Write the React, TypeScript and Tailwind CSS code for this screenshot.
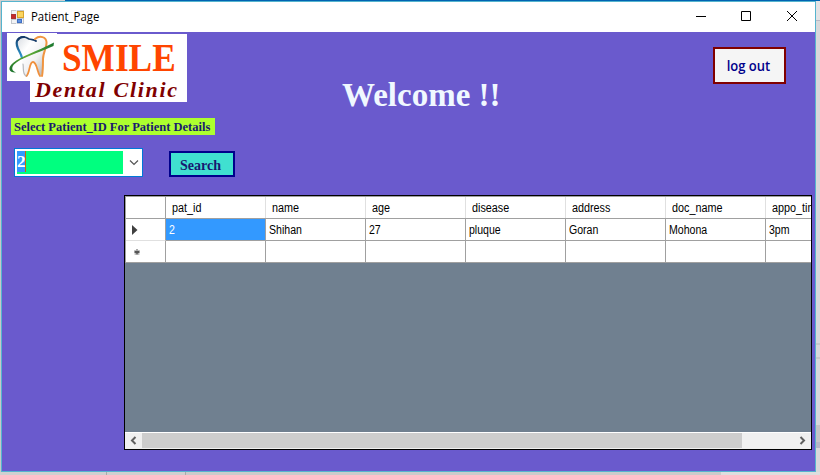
import React from "react";

const columns = ["pat_id", "name", "age", "disease", "address", "doc_name", "appo_time"];
const record = ["2", "Shihan", "27", "pluque", "Goran", "Mohona", "3pm"];

function FormIcon() {
  return (
    <svg width="14" height="14" viewBox="0 0 14 14" shapeRendering="crispEdges">
      <rect x="0" y="0" width="13" height="14" fill="#c3c7cd" />
      <rect x="1" y="1" width="4" height="3" fill="#f2f3f5" />
      <rect x="1" y="10" width="4" height="3" fill="#f2f3f5" />
      <rect x="5" y="0" width="1" height="14" fill="#e9eaec" />
      <rect x="0" y="4" width="5" height="5" fill="#a33" />
      <rect x="1" y="5" width="3" height="3" fill="#c8282a" />
      <rect x="6" y="1" width="7" height="7" fill="#d9a42c" />
      <rect x="7" y="2" width="5" height="5" fill="#fbd55f" />
      <rect x="6" y="9" width="5" height="4" fill="#3f6fc4" />
      <rect x="7" y="10" width="3" height="2" fill="#5f92e2" />
      <rect x="11" y="9" width="1" height="4" fill="#f2f3f5" />
    </svg>
  );
}

function ToothLogo() {
  return (
    <svg width="50" height="48" viewBox="0 0 50 48" fill="none" strokeLinecap="round" className="shrink-0 bg-white">
      <defs>
        <linearGradient id="enamel" x1="0" y1="0" x2="1" y2="1">
          <stop offset="0" stopColor="#d9dde2" />
          <stop offset="0.3" stopColor="#ffffff" />
          <stop offset="0.6" stopColor="#f1f1f2" />
          <stop offset="1" stopColor="#a9abb0" />
        </linearGradient>
        <linearGradient id="swoosh" x1="0" y1="1" x2="1" y2="0">
          <stop offset="0" stopColor="#176f2c" />
          <stop offset="0.5" stopColor="#63ad35" />
          <stop offset="1" stopColor="#16752f" />
        </linearGradient>
        <linearGradient id="blueEdge" x1="0" y1="0" x2="0" y2="1">
          <stop offset="0" stopColor="#15406f" />
          <stop offset="1" stopColor="#2e9bd4" />
        </linearGradient>
      </defs>
      <path d="M12 6C17 2 22 8 28 8C34 3 40 6 39 13C38 19 36 24 36 32C35 39 35 43 33 43C31 38 30 30 26 29C23 30 23 43 19 43C15 41 16 31 15 26C12 19 8 11 12 6Z" fill="url(#enamel)" />
      <path d="M15 25C14 19 8 14 10 8C11 5 14 4 17 4" stroke="url(#blueEdge)" strokeWidth="2.2" />
      <path d="M11 7C14 2 19 4 22 6C25 7 27 6 29 8" stroke="#173c69" strokeWidth="1.8" />
      <path d="M28 6C33 2 39 4 39.5 9C40 14 36 20 36 26C36 32 36 38 35 43" stroke="#ef9440" strokeWidth="2" />
      <path d="M19.500 43C23 40 22 29 26 29C30 29 30 39 33 43" stroke="#f0903d" strokeWidth="1.8" />
      <path d="M16 31C17 36 15 40 19 43" stroke="#b7b9bd" strokeWidth="1.2" />
      <path d="M9 39.500C2 40 0 35 6 30C14 23 29 19 47 9.500L46.500 13C31 20 13 25 7 31.500C4 35 5 38 9 39.500Z" fill="url(#swoosh)" />
    </svg>
  );
}

function Logo() {
  return (
    <div className="w-[180px] shrink-0">
      <div className="flex h-[47px]">
        <ToothLogo />
        <div className="mt-px h-[46px] w-[130px] bg-white pl-[5px] font-['Liberation_Serif',serif] text-[41px] leading-[46px] font-bold text-[#ff4500]">
          <span className="inline-block origin-left scale-x-[.86]">SMILE</span>
        </div>
      </div>
      <div className="ml-[23px] h-[22px] bg-white pl-[5px] font-['Liberation_Serif',serif] text-[22px] leading-[19px] font-bold tracking-[1.7px] whitespace-nowrap text-[#800000] italic">
        <span className="inline-block origin-left">Dental Clinic</span>
      </div>
    </div>
  );
}

function TitleBar() {
  return (
    <header className="flex h-[30px] shrink-0 items-center bg-white">
      <div className="ml-[9px]"><FormIcon /></div>
      <div className="ml-[6px] flex-1 font-['Open_Sans',sans-serif] text-[12px] leading-[28px]">
        <span className="inline-block origin-left scale-x-[.95]">Patient_Page</span>
      </div>
      <svg width="120" height="30" viewBox="0 0 120 30" fill="none" stroke="#000" strokeWidth="1">
        <path d="M1 14.5H11M46.5 9.5H55.5V18.5H46.5Z" />
        <path d="M92 9L102 19M102 9L92 19" />
      </svg>
    </header>
  );
}

function DataGrid() {
  return (
    <section className="ml-[122px] flex h-[255px] w-[688px] shrink-0 flex-col overflow-hidden border border-black bg-[#708090] font-['Liberation_Sans',sans-serif] text-[12px] text-black">
      <div className="w-[741px] border-t border-l border-[#a0a0a0]">
        <div className="flex h-[22px] border-b border-[#a0a0a0] bg-white">
          <div className="w-[40px] shrink-0 border-r border-[#a0a0a0]" />
          {columns.map((c) => (
            <div key={c} className="w-[100px] shrink-0 border-r border-[#e0e0e0] pl-[6px] leading-[22px]">
              <span className="inline-block origin-left scale-x-[.9]">{c}</span>
            </div>
          ))}
        </div>
        <div className="flex h-[22px] bg-white">
          <div className="flex w-[40px] shrink-0 items-center border-r border-b border-r-[#a0a0a0] border-b-[#e0e0e0] pl-[6px]">
            <svg width="6" height="10" viewBox="0 0 6 10"><path d="M0 0L5.500 5L0 10Z" fill="#404040" /></svg>
          </div>
          {record.map((v, i) => (
            <div key={v} className={`w-[100px] shrink-0 border-r border-b border-[#a0a0a0] pl-[3px] leading-[22px] ${i === 0 ? "bg-[#3399ff] text-white" : ""}`}>
              <span className="inline-block origin-left scale-x-[.88]">{v}</span>
            </div>
          ))}
        </div>
        <div className="flex h-[22px] bg-white">
          <div className="flex w-[40px] shrink-0 items-center border-r border-b border-[#a0a0a0] pl-[8px]">
            <svg width="6" height="6" viewBox="0 0 6 6" stroke="#505050" strokeWidth="1"><path d="M3 0V6M0.3 2.2L5.7 3.800M5.700 2.200L0.300 3.800M1.200 5.500L4.800 1.500M4.800 5.500L1.200 1.500" /></svg>
          </div>
          {columns.map((c) => <div key={c} className="w-[100px] shrink-0 border-r border-b border-[#a0a0a0]" />)}
        </div>
      </div>
      <div className="mt-auto flex h-[17px] items-stretch border-t border-b border-t-white border-b-[#f0f0f0] bg-[#f0f0f0]">
        <svg width="17" height="15" viewBox="0 0 17 15" fill="none" stroke="#606060" strokeWidth="2"><path d="M10.5 4L7 7.5L10.5 11" /></svg>
        <div className="w-[600px] bg-[#cdcdcd]" />
        <svg className="ml-auto" width="17" height="15" viewBox="0 0 17 15" fill="none" stroke="#606060" strokeWidth="2"><path d="M6.5 4L10 7.5L6.5 11" /></svg>
      </div>
    </section>
  );
}

export default function App() {
  return (
    <div className="h-[475px] w-[820px] overflow-hidden bg-[#d3d3d5]">
      <div className="flex h-px"><div className="w-[65px] bg-[#d0d0d0]" /><div className="flex-1 bg-[#0063b1]" /></div>
      <div className="flex">
        <div className="h-[471px] w-px shrink-0 bg-[#c8c8c8]" />
        <main className="flex h-[471px] w-[815px] shrink-0 flex-col border border-[#55b4ce] bg-[#6a5acd]">
          <TitleBar />
          <div className="flex h-[86px] shrink-0 items-start">
            <div className="mt-px ml-[5px]"><Logo /></div>
            <h1 className="mt-[43px] ml-[155px] w-[158px] font-['Liberation_Serif',serif] text-[33px] leading-[40px] font-bold whitespace-nowrap text-[#f0f8ff]">
              <span className="inline-block origin-left">Welcome !!</span>
            </h1>
            <button className="mt-[15px] ml-[213px] h-[37px] w-[73px] border-2 border-[#800000] bg-[#f5f5f5] pr-[3px] font-['Open_Sans',sans-serif] text-[14px] leading-[30px] font-semibold whitespace-nowrap text-[#00008b]">
              <span className="inline-block scale-x-[.93]">log out</span>
            </button>
          </div>
          <div className="ml-[9px] h-[17px] w-[204px] shrink-0 bg-[#adff2f] pl-[3px] font-['Liberation_Serif',serif] text-[13.5px] leading-[17px] font-bold whitespace-nowrap text-[#191970]">
            <span className="inline-block origin-left scale-x-[.926]">Select Patient_ID For Patient Details</span>
          </div>
          <div className="flex h-[60px] shrink-0 items-start pt-[13px]">
            <div className="ml-[12px] flex h-[29px] w-[129px] border border-[#0078d7] bg-white p-[2px]">
              <div className="h-[23px] w-[106px] bg-[#00ff7f]">
                <div className="h-[21px] w-[9px] border-r border-[#cc6600] bg-[#3399ff] font-['Liberation_Serif',serif] text-[17px] leading-[22px] font-bold text-white">2</div>
              </div>
              <svg className="ml-[6px]" width="10" height="23" viewBox="0 0 10 23" fill="none" stroke="#555"><path d="M1 9.5L5 13.5L9 9.5" strokeWidth="1.2" /></svg>
            </div>
            <button className="mt-[3px] ml-[26px] h-[26px] w-[66px] border-2 border-[#00008b] bg-[#40e0d0] pt-[4px] pr-[3px] font-['Liberation_Serif',serif] text-[14px] leading-[18px] font-bold text-[#191970]">Search</button>
          </div>
          <DataGrid />
        </main>
        <aside className="flex flex-1 flex-col bg-[#d8d8da]">
          <div className="h-[20px] border-b border-[#b8b8c4] bg-[#e3e3e5]" />
          <div className="h-[324px] border-b-2 border-[#c8c8ca]" />
          <div className="h-[14px] border-b-2 border-[#c8c8ca]" />
          <div className="h-[66px]" />
          <div className="h-[17px] bg-[#c4c4c6]" />
          <div className="h-[6px] bg-[#b5b5c6]" />
        </aside>
      </div>
      <div className="flex h-[3px]">
        <div className="w-[107px] border-r border-[#aaa] bg-[#d0d0d0]" />
        <div className="w-[79px] border-r border-[#aaa] bg-[#d0d0d0]" />
        <div className="w-[535px] bg-[#cbcbcb]" />
        <div className="flex-1 bg-[#dedede]" />
      </div>
    </div>
  );
}
